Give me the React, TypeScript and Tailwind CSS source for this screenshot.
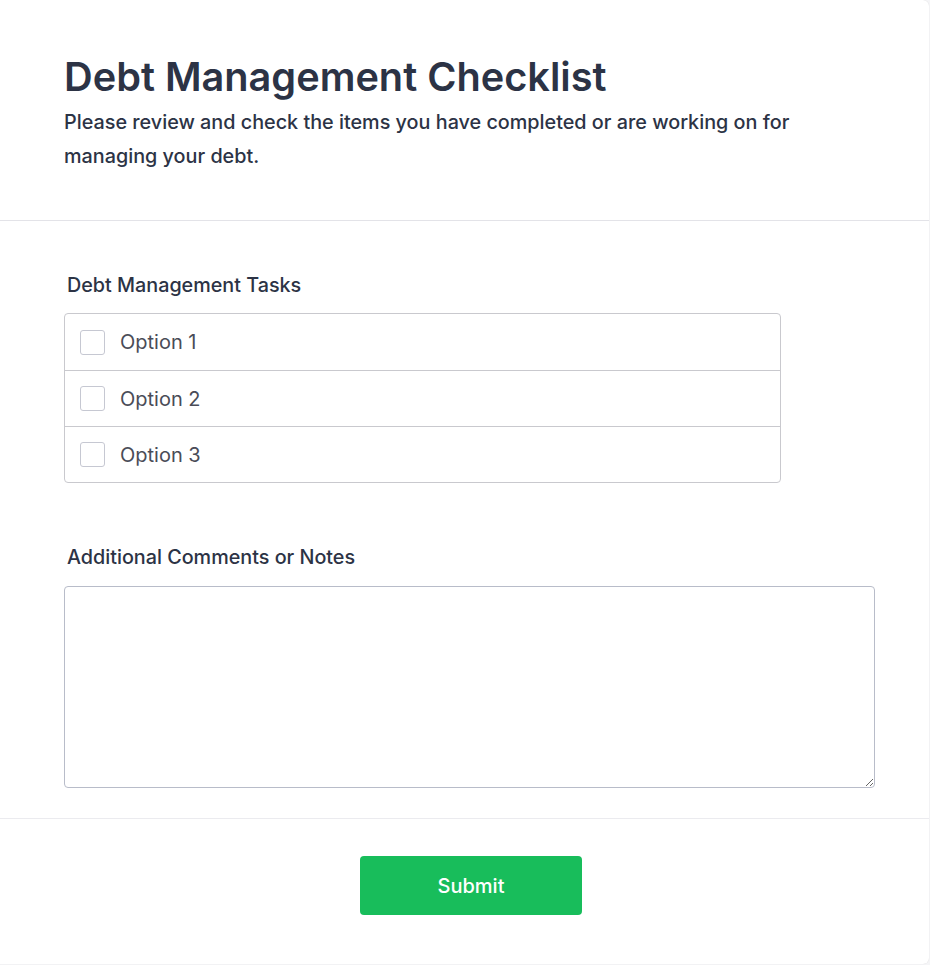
import React from "react";

export default function App() {
  const options = ["Option 1", "Option 2", "Option 3"];
  return (
    <div
      className="min-h-[965px] w-[930px] bg-[#f5f5f7]"
      style={{ fontFamily: "Inter, 'Noto Sans', sans-serif" }}
    >
      <div className="w-[929px] h-[964px] bg-white rounded-br-md rounded-tr-md shadow-[0_0_1px_rgba(0,0,0,0.15)] flex flex-col">
        <div className="px-16 pt-[53px] pb-[47px] border-b border-[#e3e3e8]">
          <h1 className="text-[39.7px] leading-[48px] font-semibold text-[#2c3345]">
            Debt Management Checklist
          </h1>
          <p className="mt-[4px] text-[19.8px] leading-[34px] font-medium text-[#2c3345] w-[780px]">
            Please review and check the items you have completed or are working on for managing your debt.
          </p>
        </div>
        <div className="px-16 pt-[50px] pb-[30px] border-b border-[#ebebef]">
          <label className="block pl-[3px] text-[19.75px] leading-[28px] font-medium text-[#2c3345]">
            Debt Management Tasks
          </label>
          <div className="mt-[14px] w-[717px] border border-[#c9c9ce] rounded-[4px]">
            {options.map((o, i) => (
              <div
                key={o}
                className={`flex items-center h-[56px] pl-[15px] ${i > 0 ? "border-t border-[#c9c9ce]" : ""}`}
              >
                <span className="w-[25px] h-[25px] rounded-[3px] border border-[#c6c8d2] bg-white" />
                <span className="ml-[15px] text-[20px] text-[#4a4c57]">{o}</span>
              </div>
            ))}
          </div>
          <label className="block mt-[60px] pl-[3px] text-[19.75px] leading-[28px] font-medium text-[#2c3345]">
            Additional Comments or Notes
          </label>
          <textarea className="mt-[15px] block w-[811px] h-[202px] border border-[#b8bcc9] rounded-[4px] resize-y outline-none" />
        </div>
        <div className="flex justify-center pt-[37px] pl-[13px]">
          <button className="w-[222px] h-[59px] rounded-[4px] bg-[#18bd5b] text-white text-[20px] font-medium">
            Submit
          </button>
        </div>
      </div>
    </div>
  );
}
